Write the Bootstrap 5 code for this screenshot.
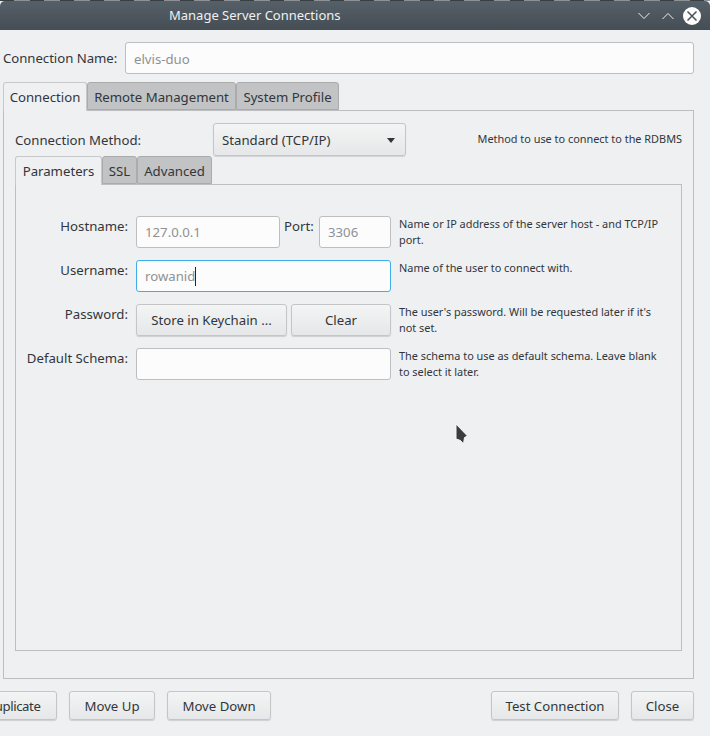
<!DOCTYPE html>
<html lang="en">
<head>
<meta charset="utf-8">
<title>Manage Server Connections</title>
<link href="https://cdn.jsdelivr.net/npm/bootstrap@5.3.0/dist/css/bootstrap.min.css" rel="stylesheet">
<style>
html,body{height:100%;overflow:hidden}
body{background:#eff0f1;color:#31363b;font-family:"Noto Sans",sans-serif;font-size:13.2px;line-height:19px;width:710px;height:736px;position:relative}
.strip{height:1px;background:repeating-linear-gradient(90deg,#3a3f44 0 14px,#8d9094 14px 30px)}
.titlebar{height:29px;background:linear-gradient(#566068,#454d54);border-radius:5px 5px 0 0;color:#eff0f1;font-size:13px;padding-left:169px;padding-right:9px}
.win-btn{width:12px;height:18px;color:#eff0f1;margin-right:12px}
.win-btn.last-chev{margin-right:9px}
.win-x{border-radius:50%;background:#fcfcfc;color:#4a5259;width:18px;height:18px}
.ctl-row{padding:12px 16px 0 3px;gap:8px}
.name-label{width:114px;letter-spacing:-.04px}
.ctl{background:#fcfcfc;border:1px solid #bcbebf;border-radius:3px;height:32px;color:#8f9194;padding:0 8px;font-size:13.2px;line-height:30px;font-family:inherit;box-shadow:none}
.ctl:focus{outline:0;box-shadow:none;background:#fcfcfc;border-color:#bcbebf;color:#8f9194}
.ctl-focus,.ctl-focus:focus{border-color:#3daee9}
.ctl-low{padding-top:1px}
.caret-mark{display:inline-block;width:1px;height:19px;background:#232629;vertical-align:-5px}
.gtk-tabs{border:0;flex-wrap:nowrap;height:28px}
.gtk-tabs .nav-link{border:1px solid #a9abac;border-radius:3px 3px 0 0;margin:0;padding:0;text-align:center;height:28px;line-height:28px;color:#31363b;background:#c2c3c4;font-size:13.2px}
.gtk-tabs .nav-link.active{background:#eff0f1;color:#31363b;border-color:#c6c8c9;border-bottom:0;position:relative;z-index:1;height:29px;line-height:28px}
.t-conn{width:84px}.t-remote{width:149px}.t-sys{width:103px}
.t-param{width:87px}.t-ssl{width:35px}.t-adv{width:75px}
.tabs-top{margin:8px 0 0 3px}
.outer-pane{margin:0 16px 0 3px;height:569px;border:1px solid #bcbebf;padding:12px 11px 0 11px}
.method-row{height:33px}
.method-label{width:198px;padding-top:1px}
.combo{width:193px;height:33px;background:linear-gradient(#f3f4f4,#e6e7e8);border:1px solid #c3c5c6;border-radius:3px;box-shadow:0 1px 1px rgba(0,0,0,.12);padding:1px 10px 0 8px;color:#31363b;font-size:13.2px;font-family:inherit}
.combo-arrow{width:0;height:0;border-left:4.5px solid transparent;border-right:4.5px solid transparent;border-top:5px solid #31363b}
.hint{font-size:10.9px;line-height:16px;color:#31363b}
.hint-top{padding-bottom:2px}
.inner-pane{height:467px;border:1px solid #bcbebf;padding:31px 16px 0 0}
.field-grid{display:grid;grid-template-columns:112px 255px 1fr;column-gap:8px;row-gap:12px}
.field-label{text-align:right;line-height:20px}
.push-btn{height:32px;background:linear-gradient(#f3f4f4,#e6e7e8);border:1px solid #c3c5c6;border-radius:3px;box-shadow:0 1px 1px rgba(0,0,0,.14);color:#31363b;font-size:13.2px;font-family:"Noto Sans",sans-serif;padding:0;line-height:30px;--bs-btn-hover-bg:#e6e7e8;--bs-btn-hover-border-color:#c3c5c6;--bs-btn-hover-color:#31363b}
.port-label{width:39px;padding-left:4px;line-height:20px}
.w-host{width:144px}
.w-port{width:72px}
.w-store{width:151px}
.w-clear{width:100px}
.foot{padding:12px 16px 0 0;gap:12px}
.foot .push-btn{height:29px;line-height:28px;padding:0}
.b-dup{width:88px;margin-left:-31px;letter-spacing:-.4px}
.b-up{width:86px}
.b-down{width:104px}
.b-test{width:128px}
.b-close{width:63px}
.pointer{position:absolute;left:455px;top:423px;width:15px;height:22px}
</style>
</head>
<body>
<div class="strip"></div>
<div class="titlebar d-flex align-items-center">
  <span class="flex-grow-1">Manage Server Connections</span>
  <span class="win-btn d-flex align-items-center justify-content-center"><svg width="12" height="8" viewBox="0 0 12 8" fill="none" stroke="currentColor"><path d="M.5 1 6 6.500 11.500 1"/></svg></span>
  <span class="win-btn last-chev d-flex align-items-center justify-content-center"><svg width="12" height="8" viewBox="0 0 12 8" fill="none" stroke="currentColor"><path d="M.5 7 6 1.500 11.500 7"/></svg></span>
  <span class="win-x d-flex align-items-center justify-content-center"><svg width="12" height="12" viewBox="0 0 12 12" fill="none" stroke="currentColor" stroke-width="1.500"><path d="M1.500 1.500l9 9M10.500 1.500l-9 9"/></svg></span>
</div>

<div class="ctl-row d-flex align-items-center">
  <label class="name-label text-nowrap flex-shrink-0" for="cn">Connection Name:</label>
  <input id="cn" class="form-control ctl ctl-low" value="elvis-duo">
</div>

<ul class="nav nav-tabs gtk-tabs tabs-top">
  <li class="nav-item"><a class="nav-link active t-conn" href="#">Connection</a></li>
  <li class="nav-item"><a class="nav-link t-remote" href="#">Remote Management</a></li>
  <li class="nav-item"><a class="nav-link t-sys" href="#">System Profile</a></li>
</ul>
<div class="outer-pane">
  <div class="method-row d-flex align-items-center">
    <span class="method-label">Connection Method:</span>
    <button class="combo d-flex align-items-center justify-content-between" type="button"><span>Standard (TCP/IP)</span><span class="combo-arrow"></span></button>
    <span class="hint hint-top ms-auto">Method to use to connect to the RDBMS</span>
  </div>
  <ul class="nav nav-tabs gtk-tabs">
    <li class="nav-item"><a class="nav-link active t-param" href="#">Parameters</a></li>
    <li class="nav-item"><a class="nav-link t-ssl" href="#">SSL</a></li>
    <li class="nav-item"><a class="nav-link t-adv" href="#">Advanced</a></li>
  </ul>
  <div class="inner-pane">
    <div class="field-grid">
      <div class="field-label">Hostname:</div>
      <div class="d-flex">
        <input class="form-control ctl w-host flex-shrink-0" value="127.0.0.1" aria-label="Hostname">
        <span class="port-label flex-shrink-0">Port:</span>
        <input class="form-control ctl w-port flex-shrink-0" value="3306" aria-label="Port">
      </div>
      <div class="hint">Name or IP address of the server host - and TCP/IP port.</div>

      <div class="field-label">Username:</div>
      <div class="form-control ctl ctl-focus">rowanid<span class="caret-mark"></span></div>
      <div class="hint">Name of the user to connect with.</div>

      <div class="field-label">Password:</div>
      <div class="d-flex gap-1">
        <button class="btn push-btn w-store flex-shrink-0" type="button">Store in Keychain ...</button>
        <button class="btn push-btn w-clear flex-shrink-0" type="button">Clear</button>
      </div>
      <div class="hint">The user's password. Will be requested later if it's not set.</div>

      <div class="field-label">Default Schema:</div>
      <input class="form-control ctl" aria-label="Default Schema">
      <div class="hint">The schema to use as default schema. Leave blank to select it later.</div>
    </div>
  </div>
</div>

<div class="foot d-flex">
  <button class="btn push-btn b-dup flex-shrink-0" type="button">Duplicate</button>
  <button class="btn push-btn b-up" type="button">Move Up</button>
  <button class="btn push-btn b-down" type="button">Move Down</button>
  <button class="btn push-btn b-test ms-auto" type="button">Test Connection</button>
  <button class="btn push-btn b-close" type="button">Close</button>
</div>

<svg class="pointer" viewBox="0 0 15 22"><path d="M1 1 12.500 13 9.500 14.500 8.500 21 5.500 17.500 1 16Z" fill="#3a3c3f" stroke="#f8f8f8" stroke-width="1"/></svg>
</body>
</html>
